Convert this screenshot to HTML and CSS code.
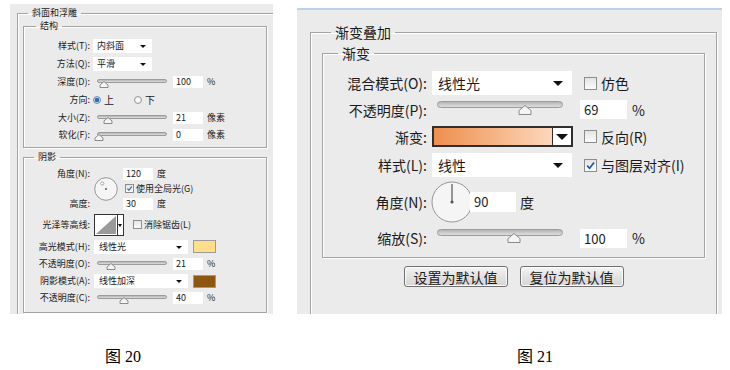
FILE: index.html
```html
<!DOCTYPE html>
<html lang="zh-CN">
<head>
  <meta charset="UTF-8">
  <title>图层样式 - 图 20 / 图 21</title>
  <link rel="stylesheet" href="styles.css">
</head>
<body>
  <div class="shots">
    <!-- 图 20：斜面和浮雕 -->
    <div class="dlg dlg-small">
      <fieldset class="grp grp-out">
        <legend>斜面和浮雕</legend>

        <fieldset class="grp grp-in grp-struct">
          <legend>结构</legend>
          <div class="row h18">
            <span class="lbl">样式(T):</span>
            <div class="sel sel-s">内斜面<i class="caret"></i></div>
          </div>
          <div class="row h18">
            <span class="lbl">方法(Q):</span>
            <div class="sel sel-s">平滑<i class="caret"></i></div>
          </div>
          <div class="row h18">
            <span class="lbl">深度(D):</span>
            <div class="slider"><div class="track"></div><svg class="thumb" style="left: 2px" viewBox="0 0 10 7"><polygon points="1,6.5 1,4 5,0.5 9,4 9,6.5" /></svg></div>
            <span class="num">100</span><span class="unit">%</span>
          </div>
          <div class="row h18">
            <span class="lbl">方向:</span>
            <span class="radio on"></span><span class="rtxt">上</span>
            <span class="radio"></span><span class="rtxt">下</span>
          </div>
          <div class="row h17">
            <span class="lbl">大小(Z):</span>
            <div class="slider"><div class="track"></div><svg class="thumb" style="left: 6px" viewBox="0 0 10 7"><polygon points="1,6.5 1,4 5,0.5 9,4 9,6.5" /></svg></div>
            <span class="num">21</span><span class="unit">像素</span>
          </div>
          <div class="row h17">
            <span class="lbl">软化(F):</span>
            <div class="slider"><div class="track"></div><svg class="thumb" style="left: -3px" viewBox="0 0 10 7"><polygon points="1,6.5 1,4 5,0.5 9,4 9,6.5" /></svg></div>
            <span class="num">0</span><span class="unit">像素</span>
          </div>
        </fieldset>

        <fieldset class="grp grp-in grp-shade">
          <legend>阴影</legend>
          <div class="ang">
            <span class="lbl ang-l1">角度(N):</span>
            <div class="dial-s">
              <svg viewBox="0 0 24 24"><circle cx="12" cy="12" r="11.3" class="dial-face" /><circle cx="8.3" cy="6.5" r="1.6" class="dial-mark" /><circle cx="12" cy="12" r="0.9" fill="#444" /></svg>
            </div>
            <div class="ctl ang-c1"><span class="num">120</span><span class="unit">度</span></div>
            <div class="ctl ang-c2"><span class="chk on"><svg viewBox="0 0 10 10"><path d="M2 5.2 L4.2 7.5 L8.2 2.2" /></svg></span><span class="ctxt">使用全局光(G)</span></div>
            <span class="lbl ang-l3">高度:</span>
            <div class="ctl ang-c3"><span class="num">30</span><span class="unit">度</span></div>
          </div>
          <div class="row h27">
            <span class="lbl">光泽等高线:</span>
            <div class="contour">
              <svg class="curve" viewBox="0 0 22 20"><polygon points="1,19 21,1 21,19" fill="#9a9a9a" /></svg>
              <div class="contour-arrow"><i class="caret"></i></div>
            </div>
            <span class="chk off"></span><span class="ctxt">消除锯齿(L)</span>
          </div>
          <div class="row h17">
            <span class="lbl">高光模式(H):</span>
            <div class="sel sel-m">线性光<i class="caret"></i></div>
            <span class="swatch swatch-light"></span>
          </div>
          <div class="row h17">
            <span class="lbl">不透明度(O):</span>
            <div class="slider"><div class="track"></div><svg class="thumb" style="left: 9px" viewBox="0 0 10 7"><polygon points="1,6.5 1,4 5,0.5 9,4 9,6.5" /></svg></div>
            <span class="num">21</span><span class="unit">%</span>
          </div>
          <div class="row h18">
            <span class="lbl">阴影模式(A):</span>
            <div class="sel sel-m">线性加深<i class="caret"></i></div>
            <span class="swatch swatch-dark"></span>
          </div>
          <div class="row h16">
            <span class="lbl">不透明度(C):</span>
            <div class="slider"><div class="track"></div><svg class="thumb" style="left: 22px" viewBox="0 0 10 7"><polygon points="1,6.5 1,4 5,0.5 9,4 9,6.5" /></svg></div>
            <span class="num">40</span><span class="unit">%</span>
          </div>
        </fieldset>
      </fieldset>
    </div>

    <!-- 图 21：渐变叠加 -->
    <div class="dlg dlg-big">
      <fieldset class="grp grp-out">
        <legend>渐变叠加</legend>
        <fieldset class="grp grp-in">
          <legend>渐变</legend>
          <div class="form">
            <span class="lbl">混合模式(O):</span>
            <div class="sel">线性光<i class="caret"></i></div>
            <div class="ctl"><span class="chk off"></span><span class="ctxt">仿色</span></div>

            <span class="lbl">不透明度(P):</span>
            <div class="slider"><div class="track"></div><svg class="thumb" style="left: 81px" viewBox="0 0 14 10"><polygon points="1,9.5 1,5.5 7,0.5 13,5.5 13,9.5" /></svg></div>
            <div class="ctl"><span class="num">69</span><span class="unit">%</span></div>

            <span class="lbl">渐变:</span>
            <div class="grad"><div class="grad-fill"></div><div class="grad-arrow"><i class="caret"></i></div></div>
            <div class="ctl"><span class="chk off"></span><span class="ctxt">反向(R)</span></div>

            <span class="lbl">样式(L):</span>
            <div class="sel">线性<i class="caret"></i></div>
            <div class="ctl"><span class="chk on"><svg viewBox="0 0 10 10"><path d="M2 5.2 L4.2 7.5 L8.2 2.2" /></svg></span><span class="ctxt">与图层对齐(I)</span></div>

            <span class="lbl">角度(N):</span>
            <div class="ctl ctl-wide">
              <svg class="dial-b" viewBox="0 0 42 42"><circle cx="21" cy="21" r="20" class="dial-face" /><line x1="21" y1="21" x2="21" y2="3" stroke="#555" stroke-width="1.2" /><circle cx="21" cy="21" r="1.6" fill="#555" /></svg>
              <span class="num">90</span><span class="unit">度</span>
            </div>
            <span></span>

            <span class="lbl">缩放(S):</span>
            <div class="slider"><div class="track"></div><svg class="thumb" style="left: 70px" viewBox="0 0 14 10"><polygon points="1,9.5 1,5.5 7,0.5 13,5.5 13,9.5" /></svg></div>
            <div class="ctl"><span class="num">100</span><span class="unit">%</span></div>
          </div>
        </fieldset>
        <div class="buttons">
          <button class="btn">设置为默认值</button>
          <button class="btn">复位为默认值</button>
        </div>
      </fieldset>
    </div>
  </div>

  <div class="captions">
    <p class="cap cap-left">图 20</p>
    <p class="cap cap-right">图 21</p>
  </div>
</body>
</html>
```

FILE: styles.css
```css
/* Reset básico */
* {
  margin: 0;
  padding: 0;
  box-sizing: border-box;
}

body {
  background: #fff;
  color: #1a1a1a;
  font-family: "Noto Sans CJK SC", "Noto Sans", sans-serif;
}

.shots {
  display: flex;
  align-items: flex-start;
  gap: 24px;
  padding-left: 10px;
}

/* painéis */
.dlg {
  background: #ebebeb;
  overflow: hidden;
}

.dlg-small {
  width: 263px;
  height: 310px;
  margin-top: 4px;
  padding: 2px 0 0 7px;
  font-size: 9px;
  line-height: 14px;
}

.dlg-big {
  width: 425px;
  height: 306px;
  margin-top: 8px;
  border-top: 2px solid #b9d1ea;
  padding: 13px 0 0 13px;
  font-size: 14px;
  line-height: 18px;
}

fieldset {
  min-width: 0;
  border: 1px solid #a3a3a3;
  box-shadow: inset 1px 1px 0 #fff, 1px 1px 0 #fff;
}

legend {
  padding: 0 4px;
}

/* --- pequeno --- */
.dlg-small .grp-out {
  width: 290px;
  height: 340px;
  padding-left: 5px;
}

.dlg-small .grp-out > legend {
  margin-left: 5px;
}

.dlg-small .grp-in {
  width: 244px;
}

.grp-struct {
  margin-top: -1px;
  padding: 4px 0 4px 0;
}

.grp-struct > legend {
  margin-left: 12px;
}

.grp-shade {
  margin-top: 2px;
  padding: 2px 0 6px 0;
}

.grp-shade > legend {
  margin-left: 10px;
}

.row {
  display: flex;
  align-items: center;
}

.h16 { height: 16px; }
.h17 { height: 17px; }
.h18 { height: 18px; }
.h27 { height: 27px; }

.dlg-small .lbl {
  width: 66px;
  margin-right: 3px;
  text-align: right;
  white-space: nowrap;
}

.sel {
  position: relative;
  background: #fff;
  white-space: nowrap;
}

.sel-s {
  width: 59px;
  height: 14px;
  padding-left: 4px;
}

.sel-m {
  width: 94px;
  height: 14px;
  margin-left: 1px;
  padding-left: 5px;
}

.caret {
  position: absolute;
  right: 6px;
  top: 6px;
  border-left: 3px solid transparent;
  border-right: 3px solid transparent;
  border-top: 3px solid #111;
}

.dlg-small .slider {
  position: relative;
  width: 70px;
  height: 12px;
  margin-left: 4px;
}

.track {
  position: absolute;
  left: 0;
  right: 0;
  top: 3px;
  height: 4px;
  border-radius: 2px;
  border: 1px solid #9c9c9c;
  background: linear-gradient(#b5b5b5, #dedede);
}

.thumb {
  position: absolute;
  top: 5px;
  width: 10px;
  height: 7px;
  fill: #f4f4f4;
  stroke: #8a8a8a;
  stroke-width: 1;
}

.num {
  display: inline-block;
  background: #fff;
}

.dlg-small .num {
  width: 30px;
  height: 12px;
  line-height: 12px;
  margin-left: 6px;
  padding-left: 3px;
}

.dlg-small .unit {
  margin-left: 4px;
}

.radio {
  display: inline-block;
  width: 8px;
  height: 8px;
  border-radius: 50%;
  border: 1px solid #9a9a9a;
  background: radial-gradient(circle, #fafafa 40%, #dcdcdc);
}

.radio:first-of-type {
  margin-left: 3px;
}

.radio.on {
  background: radial-gradient(circle, #2c6fb8 0 2px, #bcd6ee 2.5px, #e8f0f8);
  border-color: #6f8fb0;
}

.rtxt {
  margin-left: 3px;
  margin-right: 20px;
  font-size: 10px;
}

/* ângulo / altitude */
.ang {
  display: grid;
  grid-template-columns: 69px 30px 1fr;
  grid-template-rows: 15px 15px 15px;
  align-items: center;
}

.ang .lbl {
  width: auto;
  margin-right: 0;
  padding-right: 3px;
}

.ang-l1 { grid-area: 1 / 1; }
.ang-l3 { grid-area: 3 / 1; }
.ang-c1 { grid-area: 1 / 3; }
.ang-c2 { grid-area: 2 / 3; }
.ang-c3 { grid-area: 3 / 3; }

.dial-s {
  grid-row: 1 / 4;
  grid-column: 2;
  width: 24px;
  height: 24px;
  margin-left: 1px;
}

.ang .ctl {
  display: flex;
  align-items: center;
}

.ang .num {
  margin-left: 0;
}

.dial-s svg {
  display: block;
  width: 24px;
  height: 24px;
}

.dial-face {
  fill: #f5f5f5;
  stroke: #8c8c8c;
  stroke-width: 0.9;
}

.dial-mark {
  fill: #fff;
  stroke: #777;
  stroke-width: 0.6;
}

.chk {
  display: inline-block;
  position: relative;
  border: 1px solid #8d8d8d;
  background: linear-gradient(#e4e4e4, #fbfbfb);
}

.chk svg {
  position: absolute;
  inset: 0;
  width: 100%;
  height: 100%;
  fill: none;
  stroke: #2457a8;
  stroke-width: 1.6;
}

.dlg-small .chk {
  width: 9px;
  height: 9px;
  margin-left: 2px;
}

.dlg-small .ctxt {
  margin-left: 2px;
}

.contour {
  display: flex;
  width: 30px;
  height: 22px;
  margin-left: 1px;
  border: 1px solid #333;
  background: #fff;
}

.curve {
  width: 22px;
  height: 20px;
  display: block;
}

.contour-arrow {
  position: relative;
  flex: 1;
  border-left: 1px solid #333;
}

.contour-arrow .caret {
  right: 1px;
  top: 9px;
  border-left-width: 2.5px;
  border-right-width: 2.5px;
}

.h27 .chk {
  margin-left: 9px;
}

.swatch {
  display: inline-block;
  width: 23px;
  height: 13px;
  margin-left: 5px;
  border: 1px solid #9b9b9b;
}

.swatch-light {
  background: #ffde8a;
}

.swatch-dark {
  background: #8d5611;
}

/* --- grande --- */
.dlg-big .grp-out {
  width: 407px;
  height: 330px;
  padding: 0 11px;
}

.dlg-big .grp-out > legend {
  margin-left: 9px;
}

.dlg-big .grp-in {
  margin-top: 3px;
  padding: 8px 0 5px 0;
}

.dlg-big .grp-in > legend {
  margin-left: 15px;
}

.form {
  display: grid;
  grid-template-columns: 104px 141px 1fr;
  grid-template-rows: 26px 27px 27px 30px 44px 28px;
  column-gap: 5px;
  align-items: center;
}

.form .lbl {
  text-align: right;
  white-space: nowrap;
}

.form .sel {
  width: 140px;
  height: 24px;
  line-height: 24px;
  padding-left: 6px;
}

.form .caret {
  right: 9px;
  top: 10px;
  border-left-width: 5px;
  border-right-width: 5px;
  border-top-width: 5px;
}

.form .ctl {
  display: flex;
  align-items: center;
  margin-left: 5px;
}

.form .ctl-wide {
  margin-left: 0;
}

.form .chk {
  width: 13px;
  height: 13px;
  margin-left: 1px;
}

.form .ctxt {
  margin-left: 4px;
}

.form .slider {
  position: relative;
  width: 126px;
  height: 16px;
  margin-left: 5px;
  margin-top: -4px;
}

.form .track {
  top: 1px;
  height: 7px;
  border-radius: 4px;
}

.form .thumb {
  top: 5px;
  width: 14px;
  height: 10px;
}

.form .num {
  width: 47px;
  height: 19px;
  line-height: 20px;
  padding-left: 4px;
  font-size: 13px;
}

.form .ctl > .num {
  margin-left: -3px;
}

.form .unit {
  margin-left: 5px;
}

.grad {
  display: flex;
  width: 141px;
  height: 21px;
  border: 2px solid #2f2f2f;
  background: #fff;
}

.grad-fill {
  flex: 1;
  background: linear-gradient(to right, #ee8f4e, #fdd7bb);
}

.grad-arrow {
  position: relative;
  width: 19px;
  border-left: 1px solid #2f2f2f;
}

.grad-arrow .caret {
  right: 3px;
  top: 6px;
  border-left-width: 6px;
  border-right-width: 6px;
  border-top-width: 6px;
}

.dial-b {
  display: block;
  width: 42px;
  height: 42px;
  margin-left: -1px;
}

.ctl-wide .num {
  width: 46px;
  height: 20px;
  margin-left: 5px;
}

.ctl-wide .unit {
  margin-left: 4px;
}

.buttons {
  display: flex;
  justify-content: center;
  gap: 12px;
  margin-top: 8px;
}

.btn {
  height: 21px;
  padding: 0 9px;
  font-family: inherit;
  font-size: 14px;
  line-height: 18px;
  color: #1a1a1a;
  border: 1px solid #707070;
  border-radius: 3px;
  background: linear-gradient(#f5f5f5, #e2e2e2 50%, #d6d6d6);
  box-shadow: inset 0 0 0 1px #fbfbfb;
}

/* legendas */
.captions {
  display: flex;
  margin-top: 33px;
  font-family: "Liberation Serif", "Noto Sans CJK SC", serif;
  font-size: 16px;
  line-height: 20px;
  color: #000;
}

.cap-left {
  padding-left: 105px;
}

.cap-right {
  padding-left: 376px;
}
```
